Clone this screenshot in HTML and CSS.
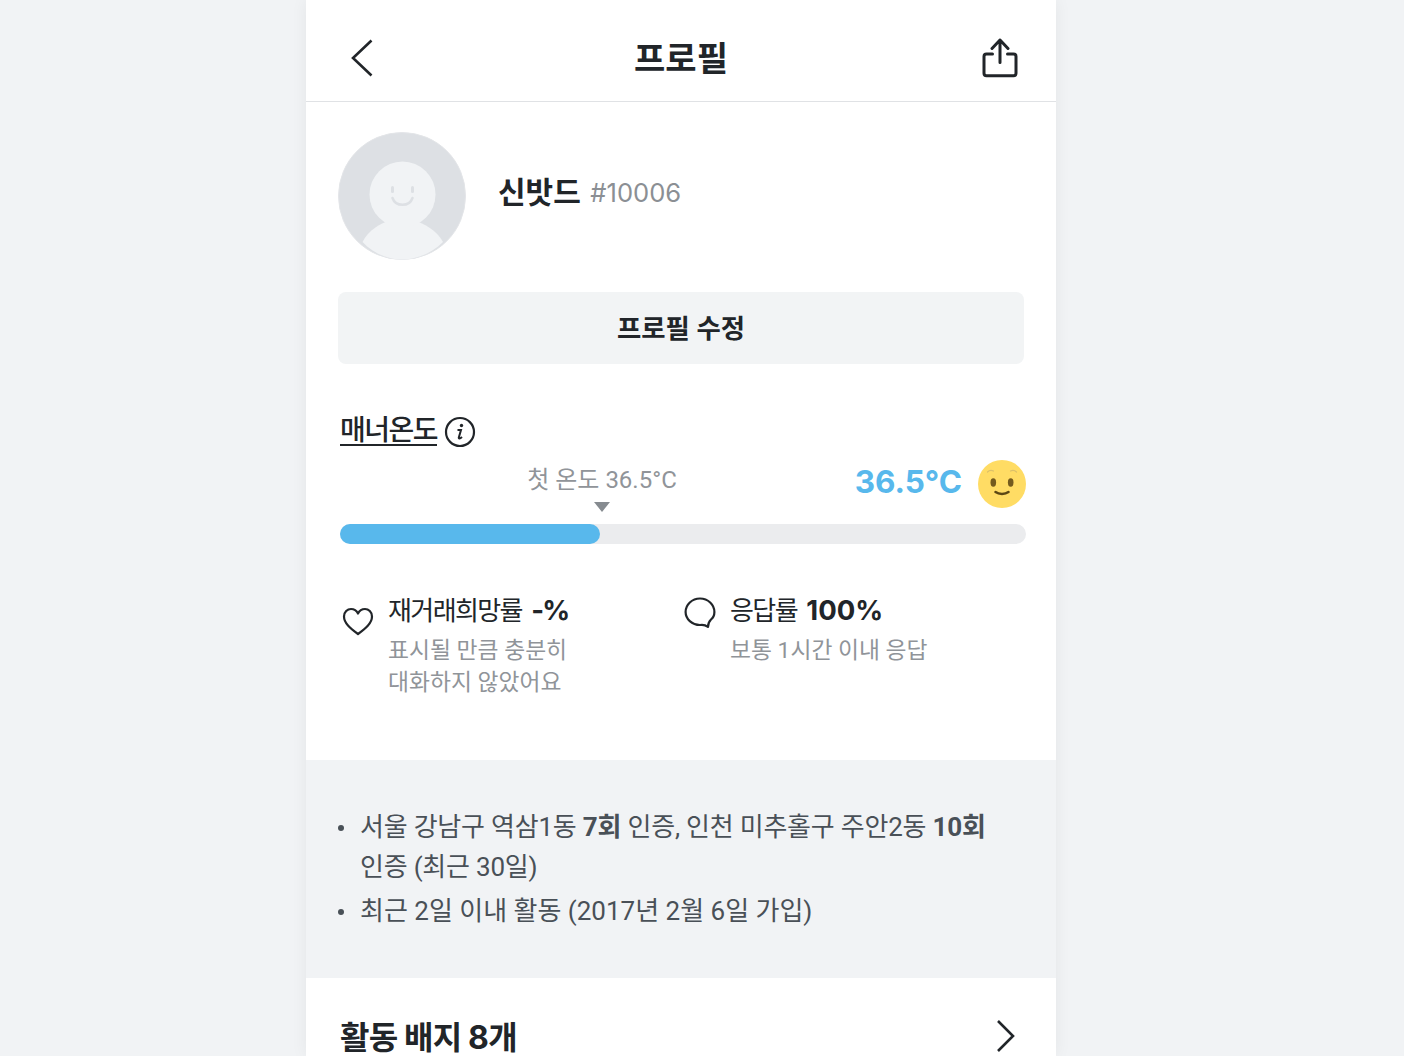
FILE: index.html
```html
<!DOCTYPE html>
<html>

<head>
  <title>프로필</title>
  <link rel="stylesheet" href="styles.css">
</head>

<body>
  <div class="page">
    <div class="top-bar">
      <svg class="top-icon" width="36" height="40" viewBox="0 0 36 40">
        <path d="M27.500 2.500 L9 20 L27.500 37.500" fill="none" stroke="#212529" stroke-width="2.600" />
      </svg>
      <h1 class="top-title">프로필</h1>
      <svg class="top-icon" width="36" height="40" viewBox="0 0 36 40">
        <path d="M18 24.500 V2 M10 10.500 L18 2 L26 10.500" fill="none" stroke="#212529" stroke-width="3" stroke-linecap="round" stroke-linejoin="round" />
        <path d="M10.500 16 H4.500 A2.500 2.500 0 0 0 2 18.500 V35.300 A2.500 2.500 0 0 0 4.500 37.800 H31.500 A2.500 2.500 0 0 0 34 35.300 V18.500 A2.500 2.500 0 0 0 31.500 16 H25.500" fill="none" stroke="#212529" stroke-width="3" stroke-linecap="round" />
      </svg>
    </div>

    <div class="profile-section">
      <div class="profile-row">
        <svg class="avatar" width="128" height="128" viewBox="0 0 128 128">
          <circle cx="64" cy="64" r="63.500" fill="#dde0e4" stroke="#e3e5e8" />
          <path d="M24.500 110 C31 97 42 92 53 88 L75 88 C86 92 98 97 105 110 C94 121 79 127.500 64 127.500 C49 127.500 35 121 24.500 110 Z" fill="#f1f3f5" />
          <circle cx="64.500" cy="62.500" r="33" fill="#f1f3f5" />
          <rect x="53" y="54" width="3" height="7" rx="1.500" fill="#dde0e4" />
          <rect x="73" y="54" width="3" height="7" rx="1.500" fill="#dde0e4" />
          <path d="M54.500 66 C57.500 75 71.500 75 74.500 66" fill="none" stroke="#dde0e4" stroke-width="2.500" stroke-linecap="round" />
        </svg>
        <div class="profile-name">신밧드 <span class="profile-id">#10006</span></div>
      </div>
      <button class="edit-button">프로필 수정</button>
    </div>

    <div class="manner-section">
      <div class="manner-title">
        <span class="manner-label">매너온도</span>
        <svg class="info-icon" width="32" height="32" viewBox="0 0 32 32">
          <circle cx="16" cy="16" r="14" fill="none" stroke="#212529" stroke-width="2.200" />
          <circle cx="17.500" cy="9.500" r="1.700" fill="#212529" />
          <path d="M13.500 14 H17 L14.800 21.500 C14.500 23 15.800 23 18 21" fill="none" stroke="#212529" stroke-width="2" />
        </svg>
      </div>
      <div class="temp-row">
        <div class="first-temp">
          <span>첫 온도 36.5°C</span>
          <i class="temp-arrow"></i>
        </div>
        <div class="now-temp">
          <span class="now-value">36.5°C</span>
          <svg width="48" height="48" viewBox="0 0 48 48">
            <circle cx="24" cy="24" r="24" fill="#ffdc64" />
            <path d="M9.500 12 C11.500 10 13.500 10 15.500 11 M32.500 11 C34.500 10 36.500 10 38.500 12" fill="none" stroke="#dcc069" stroke-width="1.200" stroke-linecap="round" />
            <ellipse cx="15.300" cy="22.500" rx="2.800" ry="4.200" fill="#735a1e" />
            <ellipse cx="32.700" cy="22.500" rx="2.800" ry="4.200" fill="#735a1e" />
            <path d="M17.500 32 C21 34.500 27 34.500 30.500 32" fill="none" stroke="#5c4713" stroke-width="2.500" stroke-linecap="round" />
          </svg>
        </div>
      </div>
      <div class="temp-bar">
        <div class="temp-fill" style="width: 260px"></div>
      </div>

      <div class="stat-grid">
        <div class="stat">
          <svg class="stat-icon stat-heart" width="32" height="32" viewBox="0 0 32 32">
            <path d="M16 28 C8 22 2 17 2 10.500 C2 6 5.500 3 9 3 C12 3 14.500 4.500 16 7.500 C17.500 4.500 20 3 23 3 C26.500 3 30 6 30 10.500 C30 17 24 22 16 28 Z" fill="none" stroke="#212529" stroke-width="2.200" stroke-linejoin="round" />
          </svg>
          <div>
            <div class="stat-title">재거래희망률 <b class="stat-none">-%</b></div>
            <div class="stat-desc">표시될 만큼 충분히<br>대화하지 않았어요</div>
          </div>
        </div>
        <div class="stat">
          <svg class="stat-icon" width="32" height="32" viewBox="0 0 32 32">
            <path d="M24 30 C21.500 28 19 27.500 16 28 C8 28 1.600 22 1.600 15 C1.600 7.500 8 1.500 16 1.500 C24 1.500 30.400 7.500 30.400 15 C30.400 18 29.500 20.500 27 22.500 C25 24.500 24 27 24 30 Z" fill="none" stroke="#212529" stroke-width="2.200" stroke-linejoin="round" />
          </svg>
          <div>
            <div class="stat-title">응답률 <b>100%</b></div>
            <div class="stat-desc">보통 1시간 이내 응답</div>
          </div>
        </div>
      </div>
    </div>

    <ul class="info-list">
      <li>서울 강남구 역삼1동 <b>7회</b> 인증, 인천 미추홀구 주안2동 <b>10회</b> 인증 (최근 30일)</li>
      <li>최근 2일 이내 활동 (2017년 2월 6일 가입)</li>
    </ul>

    <div class="badge-row">
      <span class="badge-title">활동 배지 8개</span>
      <svg class="badge-arrow" width="20" height="32" viewBox="0 0 20 32">
        <path d="M2 1 L17 16 L2 31" fill="none" stroke="#212529" stroke-width="2.600" />
      </svg>
    </div>
  </div>
</body>

</html>
```

FILE: styles.css
```css
html,
body {
  height: 100%;
}

body {
  margin: 0;
  overflow: hidden;
  background-color: #f1f3f5;
  font-family: Roboto, "Noto Sans CJK KR", sans-serif;
  color: #212529;
}

.page {
  width: 750px;
  height: 1056px;
  margin-left: 306px;
  overflow: hidden;
  background-color: #fff;
  box-shadow: 0 0 16px rgba(33, 37, 41, 0.06);
}

.top-bar {
  display: flex;
  align-items: center;
  justify-content: space-between;
  height: 102px;
  padding: 15px 38px 0;
  box-sizing: border-box;
  border-bottom: 1px solid #e0e2e5;
}

.top-icon {
  display: block;
}

.top-title {
  margin: 2px 0 0;
  font-size: 34px;
  font-weight: 700;
  line-height: 40px;
}

.profile-section {
  padding: 30px 32px 0;
}

.profile-row {
  display: flex;
  align-items: flex-start;
  gap: 32px;
}

.avatar {
  display: block;
  flex: none;
}

.profile-name {
  margin-top: 39px;
  font-size: 30px;
  font-weight: 700;
  line-height: 44px;
}

.profile-id {
  margin-left: 2px;
  font-family: Inter, sans-serif;
  font-size: 25.6px;
  font-weight: 400;
  vertical-align: 1px;
  color: #8b8f94;
}

.edit-button {
  display: block;
  width: 100%;
  height: 72px;
  margin-top: 32px;
  padding: 0 0 4px;
  border: 0;
  border-radius: 8px;
  background-color: #f2f4f5;
  font-family: inherit;
  font-size: 26.4px;
  font-weight: 700;
  color: #212529;
}

.manner-section {
  height: 396px;
  padding: 46px 30px 0 34px;
  box-sizing: border-box;
}

.manner-title {
  display: flex;
  align-items: center;
  gap: 7px;
  height: 44px;
}

.manner-label {
  font-size: 28px;
  font-weight: 500;
  letter-spacing: -1.5px;
  line-height: 26px;
  border-bottom: 2px solid #212529;
}

.temp-row {
  display: flex;
  justify-content: space-between;
  height: 50px;
  margin-top: 6px;
}

.first-temp {
  display: flex;
  flex-direction: column;
  align-items: center;
  width: 150px;
  margin-left: 187px;
  padding-top: 2px;
  font-size: 24px;
  line-height: 36px;
  white-space: nowrap;
  color: #909499;
}

.temp-arrow {
  margin-top: 4px;
  border-top: 10px solid #868b90;
  border-left: 8px solid transparent;
  border-right: 8px solid transparent;
}

.now-temp {
  display: flex;
  align-items: center;
  gap: 16px;
  height: 48px;
}

.now-value {
  padding-bottom: 6px;
  font-family: Inter, sans-serif;
  font-size: 31.5px;
  font-weight: 700;
  color: #58b8ec;
}

.temp-bar {
  height: 20px;
  margin-top: 14px;
  border-radius: 10px;
  background-color: #ebecee;
}

.temp-fill {
  height: 100%;
  border-radius: 10px;
  background-color: #58b8ec;
}

.stat-grid {
  display: grid;
  grid-template-columns: 344px 1fr;
  margin-top: 46px;
}

.stat {
  display: flex;
  align-items: flex-start;
  gap: 14px;
}

.stat-icon {
  display: block;
  flex: none;
  margin-top: 7px;
}

.stat-heart {
  margin-top: 16px;
  margin-left: 2px;
}

.stat-title {
  font-size: 26px;
  letter-spacing: -1.6px;
  line-height: 40px;
}

.stat-title b {
  margin-left: 4.5px;
  font-family: Inter, sans-serif;
  font-size: 27.5px;
  letter-spacing: 0;
}

.stat-title .stat-none {
  letter-spacing: -2px;
}

.stat-desc {
  margin-top: 4px;
  font-size: 22.8px;
  line-height: 32px;
  color: #909499;
}

.info-list {
  height: 218px;
  margin: 0;
  padding: 47px 60px 0 54px;
  box-sizing: border-box;
  list-style: none;
  background-color: #f1f3f5;
  font-size: 26px;
  line-height: 40px;
  color: #495057;
}

.info-list li {
  position: relative;
  margin-bottom: 4px;
}

.info-list li:first-child {
  letter-spacing: -0.21px;
}

.info-list li::before {
  content: "";
  position: absolute;
  top: 18px;
  left: -22px;
  width: 6px;
  height: 6px;
  border-radius: 50%;
  background-color: #495057;
}

.badge-row {
  display: flex;
  align-items: flex-start;
  justify-content: space-between;
  padding: 40px 40px 0 34px;
}

.badge-title {
  font-family: Inter, "Noto Sans CJK KR", sans-serif;
  font-size: 32px;
  font-weight: 700;
  letter-spacing: -0.8px;
  line-height: 40px;
}

.badge-arrow {
  margin-top: 2px;
}
```
